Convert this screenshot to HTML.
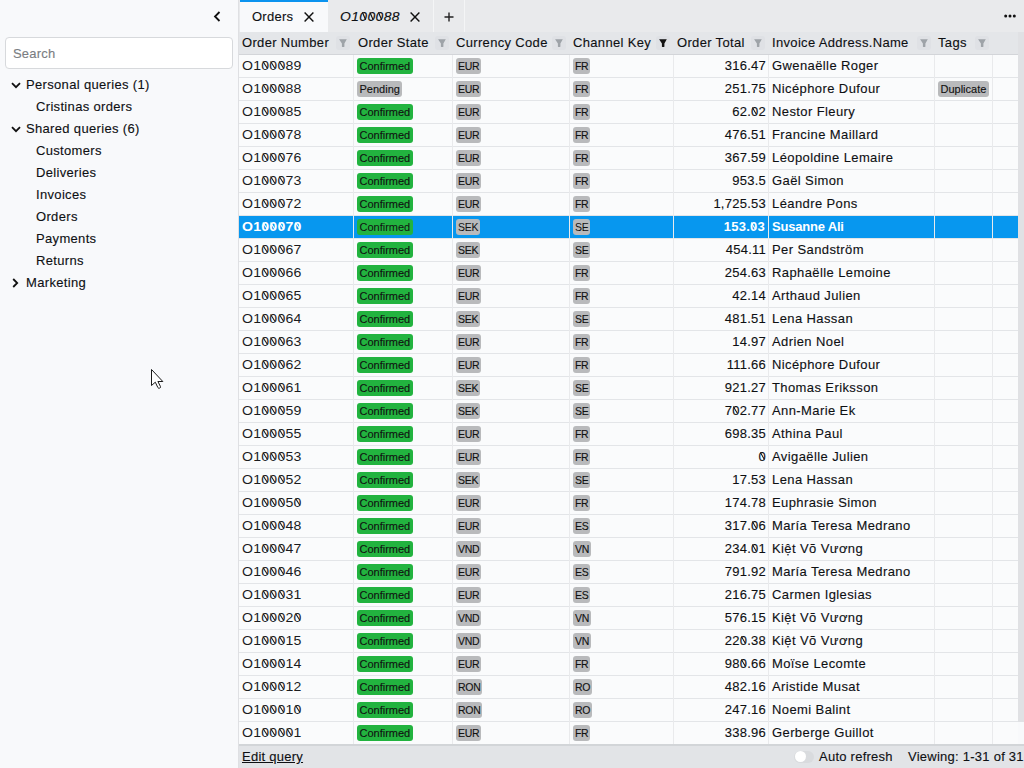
<!DOCTYPE html><html><head><meta charset="utf-8"><style>
*{box-sizing:border-box;margin:0;padding:0}
html,body{width:1024px;height:768px;overflow:hidden;background:#f8f9fb;-webkit-text-stroke:0.12px currentColor;font-family:"Liberation Sans",sans-serif;font-size:13px;color:#0e1013}
.abs{position:absolute}
#side{position:absolute;left:0;top:0;width:239px;height:768px;background:#f8f9fb;border-right:1px solid #dfe0e3}
#search{position:absolute;left:5px;top:37px;width:228px;height:32px;background:#fff;border:1px solid #d7d9dc;border-radius:4px}
#search span{position:absolute;left:7px;top:8px;color:#7a7d82;font-size:13px;letter-spacing:.2px}
.ti{position:absolute;white-space:nowrap;letter-spacing:.33px;line-height:16px}
#tabs{position:absolute;left:239px;top:0;width:785px;height:32px;background:#e9eaec}
.tab{position:absolute;top:0;height:32px}
.t{position:absolute;white-space:nowrap;line-height:16px}
#hdr{position:absolute;left:239px;top:32px;width:779px;height:23px;background:#e4e6e9;border-bottom:1px solid #d3d5d9}
.hc{position:absolute;top:3px;white-space:nowrap;letter-spacing:.33px;line-height:16px}
.fb{position:absolute;top:4px;width:14px;height:14px;border-radius:3px;background:#dfe1e5;color:#9ea3a8}
.fb svg{position:absolute;left:2px;top:2.6px}
#grid{position:absolute;left:239px;top:55px;width:779px;height:690px;background:#fafbfc}
.r{position:absolute;left:0;width:779px;height:23px;border-bottom:1px solid #e3e5e8}
.r.sel{background:#0797ef;color:#fff;font-weight:bold;-webkit-text-stroke:0}
.r.sel .nm{letter-spacing:-.2px !important}
.r.sel .c{color:#fff !important}
.r.sel .tt{margin-right:1px}
.vl{position:absolute;top:55px;width:1px;height:689px;background:#e9eaec}
.c{position:absolute;top:3px;white-space:nowrap;letter-spacing:.25px;line-height:16px}
.b{position:absolute;top:3px;height:16px;border-radius:3px;font-size:11px;line-height:16px;padding:0 2.5px;color:#111;font-weight:normal;white-space:nowrap}
.g{background:#22b33f}
.gr{background:#b9babc}
.z{position:relative}.zi::after{left:3.6px !important;transform:rotate(-22deg) !important}.z::after{content:'';position:absolute;left:3.1px;top:3.1px;width:1px;height:8.4px;background:currentColor;transform:rotate(-31deg)}
.cd{font-size:10.5px;letter-spacing:-.3px;padding:0 2px}
#foot{position:absolute;left:239px;top:744px;width:785px;height:24px;background:#e2e4e7;border-top:2px solid #d2d5d8}
#sb{position:absolute;left:1018px;top:32px;width:6px;height:690px;background:#e0e1e4}
</style></head><body>
<div id="side">
<svg class="abs" style="left:213px;top:11px" width="8" height="11" viewBox="0 0 8 11"><path d="M6.5 1L2 5.5L6.5 10" fill="none" stroke="#111" stroke-width="1.8"/></svg>
<div id="search"><span>Search</span></div>
<svg class="abs" style="left:11px;top:82px" width="10" height="7" viewBox="0 0 10 7"><path d="M1 1.2L5 5.2L9 1.2" fill="none" stroke="#111" stroke-width="1.8"/></svg>
<div class="ti" style="left:26px;top:77px">Personal queries (1)</div>
<div class="ti" style="left:36px;top:99px">Cristinas orders</div>
<svg class="abs" style="left:11px;top:126px" width="10" height="7" viewBox="0 0 10 7"><path d="M1 1.2L5 5.2L9 1.2" fill="none" stroke="#111" stroke-width="1.8"/></svg>
<div class="ti" style="left:26px;top:121px">Shared queries (6)</div>
<div class="ti" style="left:36px;top:143px">Customers</div>
<div class="ti" style="left:36px;top:165px">Deliveries</div>
<div class="ti" style="left:36px;top:187px">Invoices</div>
<div class="ti" style="left:36px;top:209px">Orders</div>
<div class="ti" style="left:36px;top:231px">Payments</div>
<div class="ti" style="left:36px;top:253px">Returns</div>
<svg class="abs" style="left:12px;top:278px" width="7" height="10" viewBox="0 0 7 10"><path d="M1.2 1L5.2 5L1.2 9" fill="none" stroke="#111" stroke-width="1.8"/></svg>
<div class="ti" style="left:26px;top:275px">Marketing</div>
</div>
<div id="tabs">
<div class="tab" style="left:1px;width:88px;background:#f8f9fb;border-top:2px solid #0b93ef"></div>
<div class="t" style="left:13px;top:9px;letter-spacing:.25px">Orders</div>
<svg class="abs" style="left:65px;top:12px" width="10" height="10" viewBox="0 0 10 10"><path d="M0.6 0.6L9.4 9.4M9.4 0.6L0.6 9.4" stroke="#111" stroke-width="1.45"/></svg>
<div class="t" style="left:101px;top:9px;font-style:italic;letter-spacing:.35px;transform:scaleX(1.07);transform-origin:0 0">O1<span class="z zi">0</span><span class="z zi">0</span><span class="z zi">0</span>88</div>
<svg class="abs" style="left:171px;top:12px" width="10" height="10" viewBox="0 0 10 10"><path d="M0.6 0.6L9.4 9.4M9.4 0.6L0.6 9.4" stroke="#111" stroke-width="1.45"/></svg>
<div class="abs" style="left:194px;top:0;width:1px;height:32px;background:#f4f5f6"></div>
<svg class="abs" style="left:205px;top:12px" width="10" height="10" viewBox="0 0 10 10"><path d="M5 0.5V9.5M0.5 5H9.5" stroke="#222" stroke-width="1.4"/></svg>
<div class="abs" style="left:225px;top:0;width:1px;height:32px;background:#f4f5f6"></div>
<svg class="abs" style="left:765px;top:14px" width="12" height="4" viewBox="0 0 12 4"><circle cx="1.7" cy="2" r="1.5" fill="#111"/><circle cx="6" cy="2" r="1.5" fill="#111"/><circle cx="10.3" cy="2" r="1.5" fill="#111"/></svg>
</div>
<div id="hdr">
<div class="hc" style="left:3px">Order Number</div>
<div class="fb" style="left:97px;"><svg width="10" height="9" viewBox="0 0 10 9"><path d="M1.1 0.3H8.8L6.4 4.4V7.7Q5.15 8.5 3.9 7.7V4.4Z" fill="currentColor"/></svg></div>
<div class="hc" style="left:119px">Order State</div>
<div class="fb" style="left:196px;"><svg width="10" height="9" viewBox="0 0 10 9"><path d="M1.1 0.3H8.8L6.4 4.4V7.7Q5.15 8.5 3.9 7.7V4.4Z" fill="currentColor"/></svg></div>
<div class="hc" style="left:217px">Currency Code</div>
<div class="fb" style="left:313px;"><svg width="10" height="9" viewBox="0 0 10 9"><path d="M1.1 0.3H8.8L6.4 4.4V7.7Q5.15 8.5 3.9 7.7V4.4Z" fill="currentColor"/></svg></div>
<div class="hc" style="left:334px">Channel Key</div>
<div class="fb" style="left:417px;color:#111;"><svg width="10" height="9" viewBox="0 0 10 9"><path d="M1.1 0.3H8.8L6.4 4.4V7.7Q5.15 8.5 3.9 7.7V4.4Z" fill="currentColor"/></svg></div>
<div class="hc" style="left:438px">Order Total</div>
<div class="fb" style="left:512px;"><svg width="10" height="9" viewBox="0 0 10 9"><path d="M1.1 0.3H8.8L6.4 4.4V7.7Q5.15 8.5 3.9 7.7V4.4Z" fill="currentColor"/></svg></div>
<div class="hc" style="left:533px">Invoice Address.Name</div>
<div class="fb" style="left:678px;"><svg width="10" height="9" viewBox="0 0 10 9"><path d="M1.1 0.3H8.8L6.4 4.4V7.7Q5.15 8.5 3.9 7.7V4.4Z" fill="currentColor"/></svg></div>
<div class="hc" style="left:699px">Tags</div>
<div class="fb" style="left:736px;"><svg width="10" height="9" viewBox="0 0 10 9"><path d="M1.1 0.3H8.8L6.4 4.4V7.7Q5.15 8.5 3.9 7.7V4.4Z" fill="currentColor"/></svg></div>
</div>
<div id="grid">
<div class="r" style="top:0px">
<div class="c" style="left:3px;letter-spacing:.2px;transform:scaleX(1.085);transform-origin:0 0;-webkit-text-stroke:0;color:#1a1b1e">O1<span class="z">0</span><span class="z">0</span><span class="z">0</span>89</div>
<div class="b g" style="left:118px">Confirmed</div>
<div class="b gr cd" style="left:217px">EUR</div>
<div class="b gr cd" style="left:334px">FR</div>
<div class="c tt" style="right:252px;text-align:right">316.47</div>
<div class="c nm" style="left:533px;letter-spacing:.4px">Gwenaëlle Roger</div>
</div>
<div class="r" style="top:23px">
<div class="c" style="left:3px;letter-spacing:.2px;transform:scaleX(1.085);transform-origin:0 0;-webkit-text-stroke:0;color:#1a1b1e">O1<span class="z">0</span><span class="z">0</span><span class="z">0</span>88</div>
<div class="b gr" style="left:118px">Pending</div>
<div class="b gr cd" style="left:217px">EUR</div>
<div class="b gr cd" style="left:334px">FR</div>
<div class="c tt" style="right:252px;text-align:right">251.75</div>
<div class="c nm" style="left:533px;letter-spacing:.4px">Nicéphore Dufour</div>
<div class="b gr" style="left:699px">Duplicate</div>
</div>
<div class="r" style="top:46px">
<div class="c" style="left:3px;letter-spacing:.2px;transform:scaleX(1.085);transform-origin:0 0;-webkit-text-stroke:0;color:#1a1b1e">O1<span class="z">0</span><span class="z">0</span><span class="z">0</span>85</div>
<div class="b g" style="left:118px">Confirmed</div>
<div class="b gr cd" style="left:217px">EUR</div>
<div class="b gr cd" style="left:334px">FR</div>
<div class="c tt" style="right:252px;text-align:right">62.<span class="z">0</span>2</div>
<div class="c nm" style="left:533px;letter-spacing:.4px">Nestor Fleury</div>
</div>
<div class="r" style="top:69px">
<div class="c" style="left:3px;letter-spacing:.2px;transform:scaleX(1.085);transform-origin:0 0;-webkit-text-stroke:0;color:#1a1b1e">O1<span class="z">0</span><span class="z">0</span><span class="z">0</span>78</div>
<div class="b g" style="left:118px">Confirmed</div>
<div class="b gr cd" style="left:217px">EUR</div>
<div class="b gr cd" style="left:334px">FR</div>
<div class="c tt" style="right:252px;text-align:right">476.51</div>
<div class="c nm" style="left:533px;letter-spacing:.4px">Francine Maillard</div>
</div>
<div class="r" style="top:92px">
<div class="c" style="left:3px;letter-spacing:.2px;transform:scaleX(1.085);transform-origin:0 0;-webkit-text-stroke:0;color:#1a1b1e">O1<span class="z">0</span><span class="z">0</span><span class="z">0</span>76</div>
<div class="b g" style="left:118px">Confirmed</div>
<div class="b gr cd" style="left:217px">EUR</div>
<div class="b gr cd" style="left:334px">FR</div>
<div class="c tt" style="right:252px;text-align:right">367.59</div>
<div class="c nm" style="left:533px;letter-spacing:.4px">Léopoldine Lemaire</div>
</div>
<div class="r" style="top:115px">
<div class="c" style="left:3px;letter-spacing:.2px;transform:scaleX(1.085);transform-origin:0 0;-webkit-text-stroke:0;color:#1a1b1e">O1<span class="z">0</span><span class="z">0</span><span class="z">0</span>73</div>
<div class="b g" style="left:118px">Confirmed</div>
<div class="b gr cd" style="left:217px">EUR</div>
<div class="b gr cd" style="left:334px">FR</div>
<div class="c tt" style="right:252px;text-align:right">953.5</div>
<div class="c nm" style="left:533px;letter-spacing:.4px">Gaël Simon</div>
</div>
<div class="r" style="top:138px">
<div class="c" style="left:3px;letter-spacing:.2px;transform:scaleX(1.085);transform-origin:0 0;-webkit-text-stroke:0;color:#1a1b1e">O1<span class="z">0</span><span class="z">0</span><span class="z">0</span>72</div>
<div class="b g" style="left:118px">Confirmed</div>
<div class="b gr cd" style="left:217px">EUR</div>
<div class="b gr cd" style="left:334px">FR</div>
<div class="c tt" style="right:252px;text-align:right">1,725.53</div>
<div class="c nm" style="left:533px;letter-spacing:.4px">Léandre Pons</div>
</div>
<div class="r sel" style="top:161px">
<div class="c" style="left:3px;letter-spacing:.2px;transform:scaleX(1.085);transform-origin:0 0;-webkit-text-stroke:0;color:#1a1b1e">O1<span class="z">0</span><span class="z">0</span><span class="z">0</span>7<span class="z">0</span></div>
<div class="b g" style="left:118px">Confirmed</div>
<div class="b gr cd" style="left:217px">SEK</div>
<div class="b gr cd" style="left:334px">SE</div>
<div class="c tt" style="right:252px;text-align:right">153.<span class="z">0</span>3</div>
<div class="c nm" style="left:533px;letter-spacing:.4px">Susanne Ali</div>
</div>
<div class="r" style="top:184px">
<div class="c" style="left:3px;letter-spacing:.2px;transform:scaleX(1.085);transform-origin:0 0;-webkit-text-stroke:0;color:#1a1b1e">O1<span class="z">0</span><span class="z">0</span><span class="z">0</span>67</div>
<div class="b g" style="left:118px">Confirmed</div>
<div class="b gr cd" style="left:217px">SEK</div>
<div class="b gr cd" style="left:334px">SE</div>
<div class="c tt" style="right:252px;text-align:right">454.11</div>
<div class="c nm" style="left:533px;letter-spacing:.4px">Per Sandström</div>
</div>
<div class="r" style="top:207px">
<div class="c" style="left:3px;letter-spacing:.2px;transform:scaleX(1.085);transform-origin:0 0;-webkit-text-stroke:0;color:#1a1b1e">O1<span class="z">0</span><span class="z">0</span><span class="z">0</span>66</div>
<div class="b g" style="left:118px">Confirmed</div>
<div class="b gr cd" style="left:217px">EUR</div>
<div class="b gr cd" style="left:334px">FR</div>
<div class="c tt" style="right:252px;text-align:right">254.63</div>
<div class="c nm" style="left:533px;letter-spacing:.4px">Raphaëlle Lemoine</div>
</div>
<div class="r" style="top:230px">
<div class="c" style="left:3px;letter-spacing:.2px;transform:scaleX(1.085);transform-origin:0 0;-webkit-text-stroke:0;color:#1a1b1e">O1<span class="z">0</span><span class="z">0</span><span class="z">0</span>65</div>
<div class="b g" style="left:118px">Confirmed</div>
<div class="b gr cd" style="left:217px">EUR</div>
<div class="b gr cd" style="left:334px">FR</div>
<div class="c tt" style="right:252px;text-align:right">42.14</div>
<div class="c nm" style="left:533px;letter-spacing:.4px">Arthaud Julien</div>
</div>
<div class="r" style="top:253px">
<div class="c" style="left:3px;letter-spacing:.2px;transform:scaleX(1.085);transform-origin:0 0;-webkit-text-stroke:0;color:#1a1b1e">O1<span class="z">0</span><span class="z">0</span><span class="z">0</span>64</div>
<div class="b g" style="left:118px">Confirmed</div>
<div class="b gr cd" style="left:217px">SEK</div>
<div class="b gr cd" style="left:334px">SE</div>
<div class="c tt" style="right:252px;text-align:right">481.51</div>
<div class="c nm" style="left:533px;letter-spacing:.4px">Lena Hassan</div>
</div>
<div class="r" style="top:276px">
<div class="c" style="left:3px;letter-spacing:.2px;transform:scaleX(1.085);transform-origin:0 0;-webkit-text-stroke:0;color:#1a1b1e">O1<span class="z">0</span><span class="z">0</span><span class="z">0</span>63</div>
<div class="b g" style="left:118px">Confirmed</div>
<div class="b gr cd" style="left:217px">EUR</div>
<div class="b gr cd" style="left:334px">FR</div>
<div class="c tt" style="right:252px;text-align:right">14.97</div>
<div class="c nm" style="left:533px;letter-spacing:.4px">Adrien Noel</div>
</div>
<div class="r" style="top:299px">
<div class="c" style="left:3px;letter-spacing:.2px;transform:scaleX(1.085);transform-origin:0 0;-webkit-text-stroke:0;color:#1a1b1e">O1<span class="z">0</span><span class="z">0</span><span class="z">0</span>62</div>
<div class="b g" style="left:118px">Confirmed</div>
<div class="b gr cd" style="left:217px">EUR</div>
<div class="b gr cd" style="left:334px">FR</div>
<div class="c tt" style="right:252px;text-align:right">111.66</div>
<div class="c nm" style="left:533px;letter-spacing:.4px">Nicéphore Dufour</div>
</div>
<div class="r" style="top:322px">
<div class="c" style="left:3px;letter-spacing:.2px;transform:scaleX(1.085);transform-origin:0 0;-webkit-text-stroke:0;color:#1a1b1e">O1<span class="z">0</span><span class="z">0</span><span class="z">0</span>61</div>
<div class="b g" style="left:118px">Confirmed</div>
<div class="b gr cd" style="left:217px">SEK</div>
<div class="b gr cd" style="left:334px">SE</div>
<div class="c tt" style="right:252px;text-align:right">921.27</div>
<div class="c nm" style="left:533px;letter-spacing:.4px">Thomas Eriksson</div>
</div>
<div class="r" style="top:345px">
<div class="c" style="left:3px;letter-spacing:.2px;transform:scaleX(1.085);transform-origin:0 0;-webkit-text-stroke:0;color:#1a1b1e">O1<span class="z">0</span><span class="z">0</span><span class="z">0</span>59</div>
<div class="b g" style="left:118px">Confirmed</div>
<div class="b gr cd" style="left:217px">SEK</div>
<div class="b gr cd" style="left:334px">SE</div>
<div class="c tt" style="right:252px;text-align:right">7<span class="z">0</span>2.77</div>
<div class="c nm" style="left:533px;letter-spacing:.4px">Ann-Marie Ek</div>
</div>
<div class="r" style="top:368px">
<div class="c" style="left:3px;letter-spacing:.2px;transform:scaleX(1.085);transform-origin:0 0;-webkit-text-stroke:0;color:#1a1b1e">O1<span class="z">0</span><span class="z">0</span><span class="z">0</span>55</div>
<div class="b g" style="left:118px">Confirmed</div>
<div class="b gr cd" style="left:217px">EUR</div>
<div class="b gr cd" style="left:334px">FR</div>
<div class="c tt" style="right:252px;text-align:right">698.35</div>
<div class="c nm" style="left:533px;letter-spacing:.4px">Athina Paul</div>
</div>
<div class="r" style="top:391px">
<div class="c" style="left:3px;letter-spacing:.2px;transform:scaleX(1.085);transform-origin:0 0;-webkit-text-stroke:0;color:#1a1b1e">O1<span class="z">0</span><span class="z">0</span><span class="z">0</span>53</div>
<div class="b g" style="left:118px">Confirmed</div>
<div class="b gr cd" style="left:217px">EUR</div>
<div class="b gr cd" style="left:334px">FR</div>
<div class="c tt" style="right:252px;text-align:right"><span class="z">0</span></div>
<div class="c nm" style="left:533px;letter-spacing:.4px">Avigaëlle Julien</div>
</div>
<div class="r" style="top:414px">
<div class="c" style="left:3px;letter-spacing:.2px;transform:scaleX(1.085);transform-origin:0 0;-webkit-text-stroke:0;color:#1a1b1e">O1<span class="z">0</span><span class="z">0</span><span class="z">0</span>52</div>
<div class="b g" style="left:118px">Confirmed</div>
<div class="b gr cd" style="left:217px">SEK</div>
<div class="b gr cd" style="left:334px">SE</div>
<div class="c tt" style="right:252px;text-align:right">17.53</div>
<div class="c nm" style="left:533px;letter-spacing:.4px">Lena Hassan</div>
</div>
<div class="r" style="top:437px">
<div class="c" style="left:3px;letter-spacing:.2px;transform:scaleX(1.085);transform-origin:0 0;-webkit-text-stroke:0;color:#1a1b1e">O1<span class="z">0</span><span class="z">0</span><span class="z">0</span>5<span class="z">0</span></div>
<div class="b g" style="left:118px">Confirmed</div>
<div class="b gr cd" style="left:217px">EUR</div>
<div class="b gr cd" style="left:334px">FR</div>
<div class="c tt" style="right:252px;text-align:right">174.78</div>
<div class="c nm" style="left:533px;letter-spacing:.4px">Euphrasie Simon</div>
</div>
<div class="r" style="top:460px">
<div class="c" style="left:3px;letter-spacing:.2px;transform:scaleX(1.085);transform-origin:0 0;-webkit-text-stroke:0;color:#1a1b1e">O1<span class="z">0</span><span class="z">0</span><span class="z">0</span>48</div>
<div class="b g" style="left:118px">Confirmed</div>
<div class="b gr cd" style="left:217px">EUR</div>
<div class="b gr cd" style="left:334px">ES</div>
<div class="c tt" style="right:252px;text-align:right">317.<span class="z">0</span>6</div>
<div class="c nm" style="left:533px;letter-spacing:.4px">María Teresa Medrano</div>
</div>
<div class="r" style="top:483px">
<div class="c" style="left:3px;letter-spacing:.2px;transform:scaleX(1.085);transform-origin:0 0;-webkit-text-stroke:0;color:#1a1b1e">O1<span class="z">0</span><span class="z">0</span><span class="z">0</span>47</div>
<div class="b g" style="left:118px">Confirmed</div>
<div class="b gr cd" style="left:217px">VND</div>
<div class="b gr cd" style="left:334px">VN</div>
<div class="c tt" style="right:252px;text-align:right">234.<span class="z">0</span>1</div>
<div class="c nm" style="left:533px;letter-spacing:.4px">Kiệt Võ Vương</div>
</div>
<div class="r" style="top:506px">
<div class="c" style="left:3px;letter-spacing:.2px;transform:scaleX(1.085);transform-origin:0 0;-webkit-text-stroke:0;color:#1a1b1e">O1<span class="z">0</span><span class="z">0</span><span class="z">0</span>46</div>
<div class="b g" style="left:118px">Confirmed</div>
<div class="b gr cd" style="left:217px">EUR</div>
<div class="b gr cd" style="left:334px">ES</div>
<div class="c tt" style="right:252px;text-align:right">791.92</div>
<div class="c nm" style="left:533px;letter-spacing:.4px">María Teresa Medrano</div>
</div>
<div class="r" style="top:529px">
<div class="c" style="left:3px;letter-spacing:.2px;transform:scaleX(1.085);transform-origin:0 0;-webkit-text-stroke:0;color:#1a1b1e">O1<span class="z">0</span><span class="z">0</span><span class="z">0</span>31</div>
<div class="b g" style="left:118px">Confirmed</div>
<div class="b gr cd" style="left:217px">EUR</div>
<div class="b gr cd" style="left:334px">ES</div>
<div class="c tt" style="right:252px;text-align:right">216.75</div>
<div class="c nm" style="left:533px;letter-spacing:.4px">Carmen Iglesias</div>
</div>
<div class="r" style="top:552px">
<div class="c" style="left:3px;letter-spacing:.2px;transform:scaleX(1.085);transform-origin:0 0;-webkit-text-stroke:0;color:#1a1b1e">O1<span class="z">0</span><span class="z">0</span><span class="z">0</span>2<span class="z">0</span></div>
<div class="b g" style="left:118px">Confirmed</div>
<div class="b gr cd" style="left:217px">VND</div>
<div class="b gr cd" style="left:334px">VN</div>
<div class="c tt" style="right:252px;text-align:right">576.15</div>
<div class="c nm" style="left:533px;letter-spacing:.4px">Kiệt Võ Vương</div>
</div>
<div class="r" style="top:575px">
<div class="c" style="left:3px;letter-spacing:.2px;transform:scaleX(1.085);transform-origin:0 0;-webkit-text-stroke:0;color:#1a1b1e">O1<span class="z">0</span><span class="z">0</span><span class="z">0</span>15</div>
<div class="b g" style="left:118px">Confirmed</div>
<div class="b gr cd" style="left:217px">VND</div>
<div class="b gr cd" style="left:334px">VN</div>
<div class="c tt" style="right:252px;text-align:right">22<span class="z">0</span>.38</div>
<div class="c nm" style="left:533px;letter-spacing:.4px">Kiệt Võ Vương</div>
</div>
<div class="r" style="top:598px">
<div class="c" style="left:3px;letter-spacing:.2px;transform:scaleX(1.085);transform-origin:0 0;-webkit-text-stroke:0;color:#1a1b1e">O1<span class="z">0</span><span class="z">0</span><span class="z">0</span>14</div>
<div class="b g" style="left:118px">Confirmed</div>
<div class="b gr cd" style="left:217px">EUR</div>
<div class="b gr cd" style="left:334px">FR</div>
<div class="c tt" style="right:252px;text-align:right">98<span class="z">0</span>.66</div>
<div class="c nm" style="left:533px;letter-spacing:.4px">Moïse Lecomte</div>
</div>
<div class="r" style="top:621px">
<div class="c" style="left:3px;letter-spacing:.2px;transform:scaleX(1.085);transform-origin:0 0;-webkit-text-stroke:0;color:#1a1b1e">O1<span class="z">0</span><span class="z">0</span><span class="z">0</span>12</div>
<div class="b g" style="left:118px">Confirmed</div>
<div class="b gr cd" style="left:217px">RON</div>
<div class="b gr cd" style="left:334px">RO</div>
<div class="c tt" style="right:252px;text-align:right">482.16</div>
<div class="c nm" style="left:533px;letter-spacing:.4px">Aristide Musat</div>
</div>
<div class="r" style="top:644px">
<div class="c" style="left:3px;letter-spacing:.2px;transform:scaleX(1.085);transform-origin:0 0;-webkit-text-stroke:0;color:#1a1b1e">O1<span class="z">0</span><span class="z">0</span><span class="z">0</span>1<span class="z">0</span></div>
<div class="b g" style="left:118px">Confirmed</div>
<div class="b gr cd" style="left:217px">RON</div>
<div class="b gr cd" style="left:334px">RO</div>
<div class="c tt" style="right:252px;text-align:right">247.16</div>
<div class="c nm" style="left:533px;letter-spacing:.4px">Noemi Balint</div>
</div>
<div class="r" style="top:667px">
<div class="c" style="left:3px;letter-spacing:.2px;transform:scaleX(1.085);transform-origin:0 0;-webkit-text-stroke:0;color:#1a1b1e">O1<span class="z">0</span><span class="z">0</span><span class="z">0</span><span class="z">0</span>1</div>
<div class="b g" style="left:118px">Confirmed</div>
<div class="b gr cd" style="left:217px">EUR</div>
<div class="b gr cd" style="left:334px">FR</div>
<div class="c tt" style="right:252px;text-align:right">338.96</div>
<div class="c nm" style="left:533px;letter-spacing:.4px">Gerberge Guillot</div>
</div>
</div>
<div class="vl" style="left:353px"></div>
<div class="vl" style="left:452px"></div>
<div class="vl" style="left:569px"></div>
<div class="vl" style="left:673px"></div>
<div class="vl" style="left:768px"></div>
<div class="vl" style="left:934px"></div>
<div class="vl" style="left:992px"></div>
<div id="sb"></div>
<div id="foot">
<div class="t" style="left:3px;top:3px;text-decoration:underline;letter-spacing:.25px">Edit query</div>
<div class="abs" style="left:555px;top:5px;width:20px;height:12px;border-radius:6px;background:#d9dbde"></div>
<div class="abs" style="left:556px;top:5px;width:11px;height:11px;border-radius:6px;background:#fff"></div>
<div class="t" style="left:580px;top:3px;letter-spacing:.25px">Auto refresh</div>
<div class="t" style="left:669px;top:3px;letter-spacing:.25px">Viewing: 1-31 of 31</div>
</div>
<svg class="abs" style="left:148px;top:366px" width="20" height="26" viewBox="0 0 20 26"><path d="M3.5 3.5V19.5L7.3 16.2L9.9 21.6Q10.6 22.6 11.8 22.1Q12.9 21.5 12.4 20.4L9.9 15.5H14.8Z" fill="#fff" stroke="#000" stroke-width="0.9" stroke-linejoin="round"/></svg>
</body></html>
